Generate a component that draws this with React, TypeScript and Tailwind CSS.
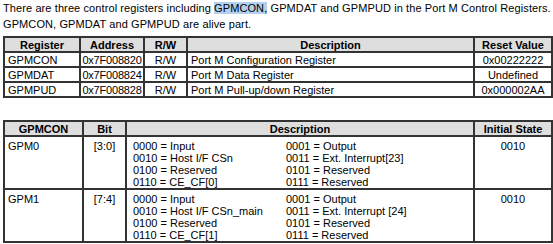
const regs = [
  { name: "GPMCON", addr: "0x7F008820", rw: "R/W", desc: "Port M Configuration Register", reset: "0x00222222" },
  { name: "GPMDAT", addr: "0x7F008824", rw: "R/W", desc: "Port M Data Register", reset: "Undefined" },
  { name: "GPMPUD", addr: "0x7F008828", rw: "R/W", desc: "Port M Pull-up/down Register", reset: "0x000002AA" },
];

const pins = [
  {
    name: "GPM0",
    bit: "[3:0]",
    left: ["0000 = Input", "0010 = Host I/F CSn", "0100 = Reserved", "0110 = CE_CF[0]"],
    right: ["0001 = Output", "0011 = Ext. Interrupt[23]", "0101 = Reserved", "0111 = Reserved"],
    init: "0010",
  },
  {
    name: "GPM1",
    bit: "[7:4]",
    left: ["0000 = Input", "0010 = Host I/F CSn_main", "0100 = Reserved", "0110 = CE_CF[1]"],
    right: ["0001 = Output", "0011 = Ext. Interrupt [24]", "0101 = Reserved", "0111 = Reserved"],
    init: "0010",
  },
];

const th = "border-2 border-[#333] bg-[#dedede] font-bold text-center h-[15px] p-0 leading-[12px]";
const td = "border-2 border-[#333] h-[15px] p-0 leading-[12px]";

export default function App() {
  return (
    <div className="w-[553px] h-[244px] bg-white text-black text-[11px] font-['Liberation_Sans',Arial,sans-serif] overflow-hidden pl-[3px]">
      <p className="leading-[16px] tracking-[0.1px]">
        There are three control registers including <span className="bg-[#b3d1ee]">GPMCON,</span> GPMDAT and GPMPUD in the Port M Control Registers.
      </p>
      <p className="leading-[16px] tracking-[0.1px]">GPMCON, GPMDAT and GPMPUD are alive part.</p>

      <table className="mt-[4px] w-[548px] border-collapse table-fixed">
        <colgroup>
          <col className="w-[76px]" />
          <col className="w-[64px]" />
          <col className="w-[43px]" />
          <col className="w-[287px]" />
          <col className="w-[78px]" />
        </colgroup>
        <thead>
          <tr>
            <th className={th}>Register</th>
            <th className={th}>Address</th>
            <th className={th}>R/W</th>
            <th className={th}>Description</th>
            <th className={th}>Reset Value</th>
          </tr>
        </thead>
        <tbody>
          {regs.map((r) => (
            <tr key={r.name}>
              <td className={td + " pl-[3px]"}>{r.name}</td>
              <td className={td + " text-center tracking-[-0.2px]"}>{r.addr}</td>
              <td className={td + " text-center"}>{r.rw}</td>
              <td className={td + " pl-[3px]"}>{r.desc}</td>
              <td className={td + " text-center"}>{r.reset}</td>
            </tr>
          ))}
        </tbody>
      </table>

      <table className="mt-[22px] w-[548px] border-collapse table-fixed">
        <colgroup>
          <col className="w-[79px]" />
          <col className="w-[43px]" />
          <col className="w-[348px]" />
          <col className="w-[78px]" />
        </colgroup>
        <thead>
          <tr>
            <th className={th}>GPMCON</th>
            <th className={th}>Bit</th>
            <th className={th}>Description</th>
            <th className={th}>Initial State</th>
          </tr>
        </thead>
        <tbody>
          {pins.map((p) => (
            <tr key={p.name}>
              <td className={td + " align-top pl-[3px] pt-[3px]"}>{p.name}</td>
              <td className={td + " align-top text-center pt-[3px]"}>{p.bit}</td>
              <td className={td + " align-top pt-[3px] pb-0"}>
                <div className="grid grid-cols-[153px_1fr] pl-[6px]">
                  <div className="flex flex-col">
                    {p.left.map((l) => (
                      <span key={l} className="leading-[12px]">{l}</span>
                    ))}
                  </div>
                  <div className="flex flex-col">
                    {p.right.map((l) => (
                      <span key={l} className="leading-[12px]">{l}</span>
                    ))}
                  </div>
                </div>
              </td>
              <td className={td + " align-top text-center pt-[3px]"}>{p.init}</td>
            </tr>
          ))}
        </tbody>
      </table>
    </div>
  );
}
